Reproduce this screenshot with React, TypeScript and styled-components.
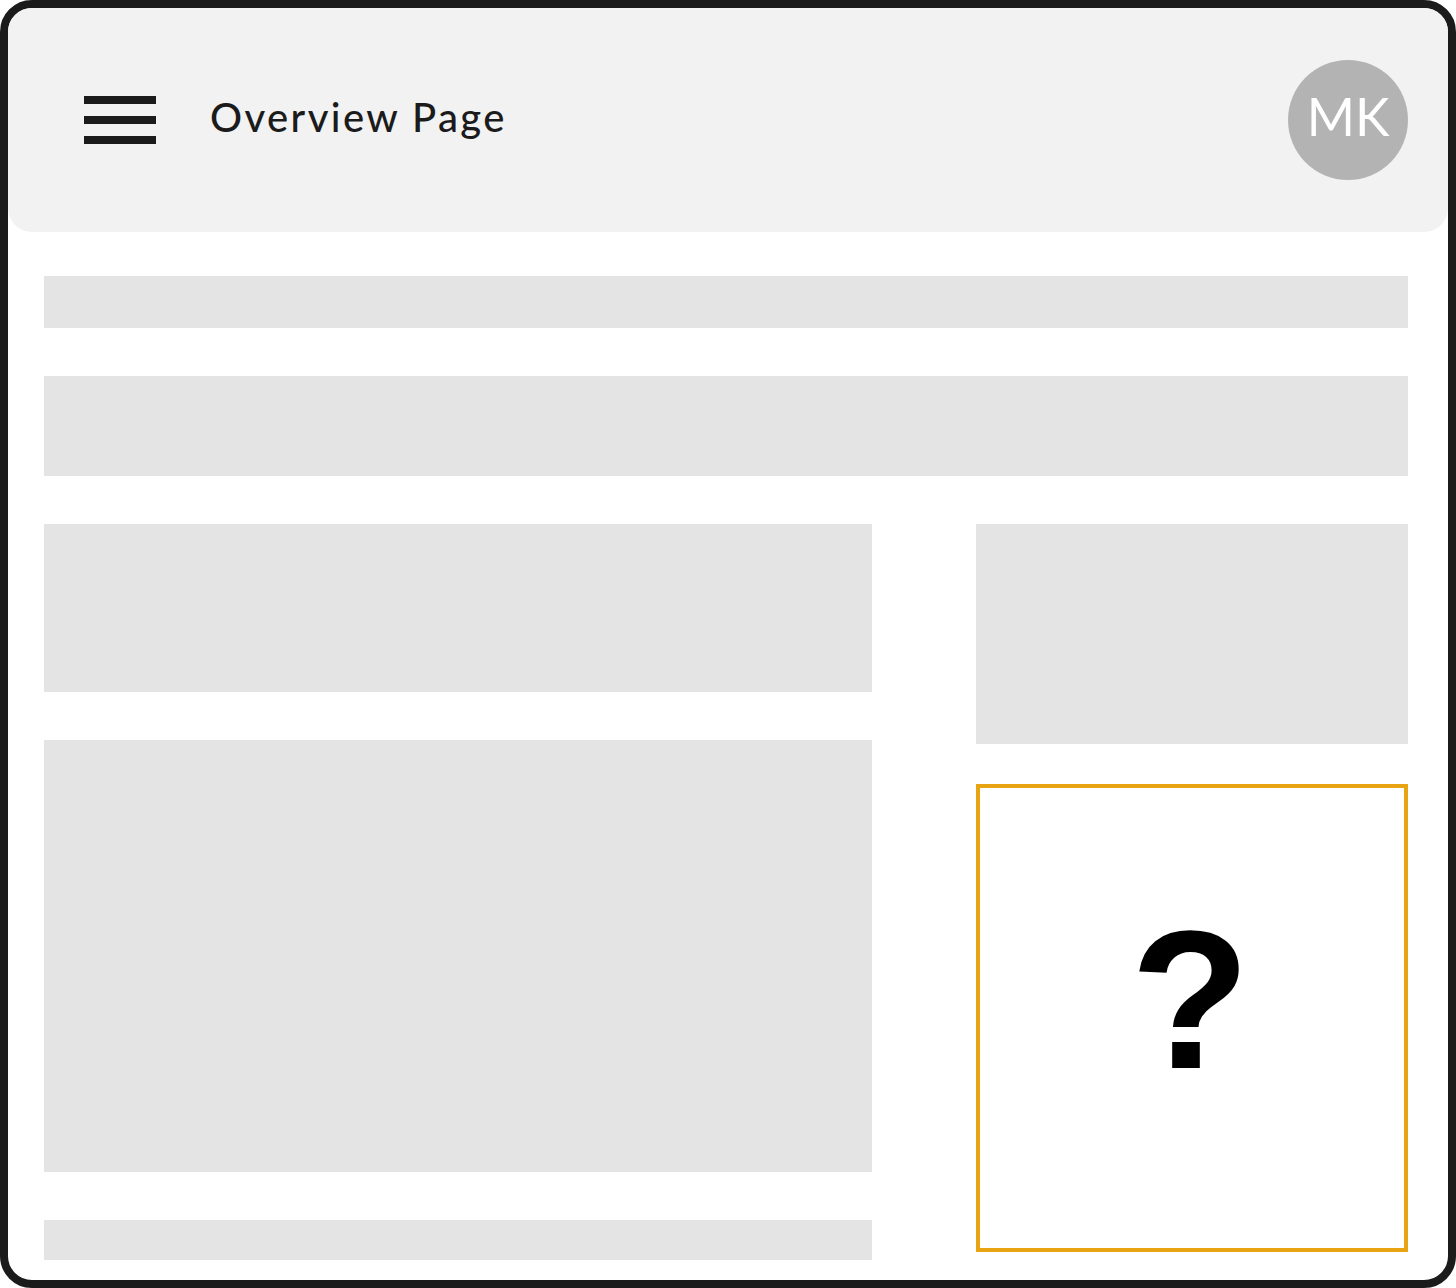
import React from 'react';
import styled, {createGlobalStyle} from "styled-components";

const GlobalStyle = createGlobalStyle`
  * {
    box-sizing: border-box;
  }

  html, body {
    margin: 0;
    padding: 0;
    background: #ffffff;
  }
`

const leftBlocks = [168, 432, 40]

export default function App() {
    return (
        <>
            <GlobalStyle/>
            <Frame>
                <Header>
                    <MenuButton aria-label="menu">
                        <MenuLine/>
                        <MenuLine/>
                        <MenuLine/>
                    </MenuButton>
                    <Title>Overview Page</Title>
                    <Avatar>MK</Avatar>
                </Header>
                <Main>
                    <Placeholder $height={52}/>
                    <Placeholder $height={100}/>
                    <Columns>
                        <Column $gap={48}>
                            {leftBlocks.map((h, index) => (
                                <Placeholder key={index} $height={h}/>
                            ))}
                        </Column>
                        <Column $gap={40}>
                            <Placeholder $height={220}/>
                            <MysteryBox>?</MysteryBox>
                        </Column>
                    </Columns>
                </Main>
            </Frame>
        </>
    );
}

const Frame = styled.div`
  width: 1456px;
  height: 1288px;
  border: 8px solid #1b1b1b;
  border-radius: 32px;
  overflow: hidden;
  background: #ffffff;
  display: flex;
  flex-direction: column;
`

const Header = styled.header`
  height: 224px;
  flex-shrink: 0;
  background-color: #f2f2f2;
  border-radius: 0 0 24px 24px;
  display: flex;
  align-items: center;
  padding: 0 40px 0 76px;
`

const MenuButton = styled.div`
  width: 72px;
  display: flex;
  flex-direction: column;
  gap: 12px;
`

const MenuLine = styled.span`
  display: block;
  height: 8px;
  background: #1b1b1b;
`

const Title = styled.h1`
  margin: -6px 0 0 54px;
  font-family: "Lato", "Noto Sans", sans-serif;
  font-size: 40px;
  font-weight: 500;
  color: #1b1b1b;
  letter-spacing: 2.4px;
  flex: 1;
`

const Avatar = styled.div`
  width: 120px;
  height: 120px;
  border-radius: 50%;
  background: #b3b3b3;
  color: #ffffff;
  display: flex;
  justify-content: center;
  align-items: center;
  font-family: "Lato", "Noto Sans", sans-serif;
  font-size: 52px;
  font-weight: 400;
  padding-bottom: 8px;
`

const Main = styled.main`
  display: flex;
  flex-direction: column;
  gap: 48px;
  padding: 44px 40px 0 36px;
`

const Placeholder = styled.div<{ $height: number }>`
  height: ${props => props.$height}px;
  background: #e4e4e4;
`

const Columns = styled.div`
  display: grid;
  grid-template-columns: 828px 432px;
  column-gap: 104px;
  align-items: start;
`

const Column = styled.div<{ $gap: number }>`
  display: flex;
  flex-direction: column;
  gap: ${props => props.$gap}px;
`

const MysteryBox = styled.div`
  height: 468px;
  border: 4px solid #e8a413;
  display: flex;
  justify-content: center;
  align-items: center;
  font-family: "Liberation Sans", Arial, sans-serif;
  font-weight: 700;
  font-size: 196px;
  line-height: 1;
  color: #000000;
  padding-bottom: 34px;
  padding-right: 4px;
`
